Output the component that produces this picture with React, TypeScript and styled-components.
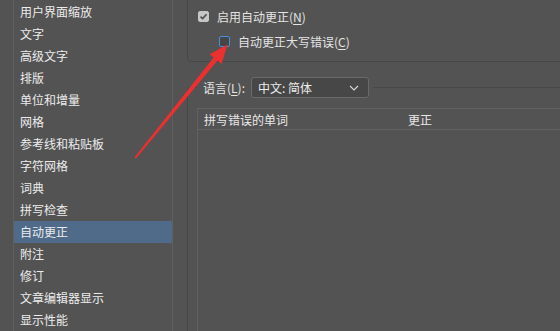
import styled, { createGlobalStyle } from "styled-components";

const GlobalStyle = createGlobalStyle`
  html, body {
    margin: 0;
    padding: 0;
    background: #535353;
  }
  body {
    font-family: "Noto Sans CJK SC", "Noto Sans", sans-serif;
    font-size: 12px;
    color: #e4e4e4;
  }
`;

const sections = [
  "用户界面缩放",
  "文字",
  "高级文字",
  "排版",
  "单位和增量",
  "网格",
  "参考线和粘贴板",
  "字符网格",
  "词典",
  "拼写检查",
  "自动更正",
  "附注",
  "修订",
  "文章编辑器显示",
  "显示性能",
];

export default function App() {
  return (
    <>
      <GlobalStyle />
      <Screen>
        <Sidebar>
          {sections.map((name) => (
            <NavItem key={name} $active={name === "自动更正"}>
              {name}
            </NavItem>
          ))}
        </Sidebar>

        <Main>
          <GroupBox>
            <CheckRow>
              <CheckBox $checked>
                <svg width="9" height="9" viewBox="0 0 9 9">
                  <path d="M1.5 4.6 L3.6 6.6 L7.6 2.2" fill="none" stroke="#4e4e4e" strokeWidth="1.6" />
                </svg>
              </CheckBox>
              <span>
                启用自动更正(<u>N</u>)
              </span>
            </CheckRow>
            <CheckRow $indent>
              <CheckBox $focused />
              <span>
                自动更正大写错误(<u>C</u>)
              </span>
            </CheckRow>
          </GroupBox>

          <Fieldset>
            <Legend>
              <span>
                语言(<u>L</u>):
              </span>
              <Select>
                <span>中文: 简体</span>
                <svg width="10" height="6" viewBox="0 0 10 6">
                  <path d="M1 1 L5 5 L9 1" fill="none" stroke="#d8d8d8" strokeWidth="1.1" />
                </svg>
              </Select>
            </Legend>

            <WordTable>
              <TableHead>
                <HeadCell>拼写错误的单词</HeadCell>
                <HeadCell>更正</HeadCell>
              </TableHead>
            </WordTable>
          </Fieldset>
        </Main>

        <Annotation width="560" height="331" viewBox="0 0 560 331">
          <polygon
            points="134.4,157.6 213.6,57.6 209.6,54.2 227.5,44.5 221.6,64 217.6,60.6 136,158.6"
            fill="#ec2f2f"
          />
        </Annotation>
      </Screen>
    </>
  );
}

const Screen = styled.div`
  position: relative;
  display: flex;
  width: 560px;
  height: 331px;
  overflow: hidden;
`;

const Sidebar = styled.div`
  flex: none;
  width: 158px;
  margin-left: 13px;
  padding-top: 1px;
  border-left: 1px solid #5f5f5f;
  border-right: 1px solid #5f5f5f;
`;

const NavItem = styled.div<{ $active?: boolean }>`
  height: 22px;
  line-height: 22px;
  padding-left: 6px;
  color: #ececec;
  white-space: nowrap;
  background: ${(p) => (p.$active ? "#4f6b89" : "transparent")};
`;

const Main = styled.div`
  flex: none;
  display: flex;
  flex-direction: column;
  margin-left: 14px;
  width: 420px;
`;

const GroupBox = styled.div`
  margin-top: -10px;
  padding: 18px 0 13px 10px;
  border: 1px solid #474747;
  border-radius: 4px;
  display: flex;
  flex-direction: column;
  gap: 11px;
`;

const CheckRow = styled.div<{ $indent?: boolean }>`
  display: flex;
  align-items: center;
  gap: 8px;
  height: 14px;
  margin-left: ${(p) => (p.$indent ? "21px" : "0")};
  white-space: nowrap;

  u {
    text-underline-offset: 2px;
  }
`;

const CheckBox = styled.span<{ $checked?: boolean; $focused?: boolean }>`
  flex: none;
  box-sizing: border-box;
  width: 11px;
  height: 11px;
  border-radius: 2px;
  display: flex;
  align-items: center;
  justify-content: center;
  background: ${(p) => (p.$checked ? "#c6c6c6" : "#464646")};
  border: 1px solid ${(p) => (p.$focused ? "#4a8fdc" : p.$checked ? "#c6c6c6" : "#6a6a6a")};
`;

const Fieldset = styled.fieldset`
  margin: 15px 0 0 0;
  padding: 10px 0 0 9px;
  border: 1px solid #474747;
  border-radius: 4px;
  min-width: 0;
`;

const Legend = styled.legend`
  display: flex;
  align-items: center;
  gap: 6px;
  padding: 0 4px 0 6px;
  margin-left: 0;
  white-space: nowrap;

  u {
    text-underline-offset: 2px;
  }
`;

const Select = styled.div`
  box-sizing: border-box;
  width: 118px;
  height: 21px;
  display: flex;
  align-items: center;
  justify-content: space-between;
  padding: 0 9px 0 6px;
  background: #474747;
  border: 1px solid #6a6a6a;
  border-radius: 3px;
  color: #ececec;
`;

const WordTable = styled.div`
  height: 300px;
  border: 1px solid #626262;
  border-right: none;
`;

const TableHead = styled.div`
  display: grid;
  grid-template-columns: 204px 1fr;
  height: 20px;
  align-items: center;
  border-bottom: 1px solid #626262;
`;

const HeadCell = styled.div`
  padding-left: 6px;
  color: #e8e8e8;
  white-space: nowrap;
`;

const Annotation = styled.svg`
  position: absolute;
  left: 0;
  top: 0;
  pointer-events: none;
`;
